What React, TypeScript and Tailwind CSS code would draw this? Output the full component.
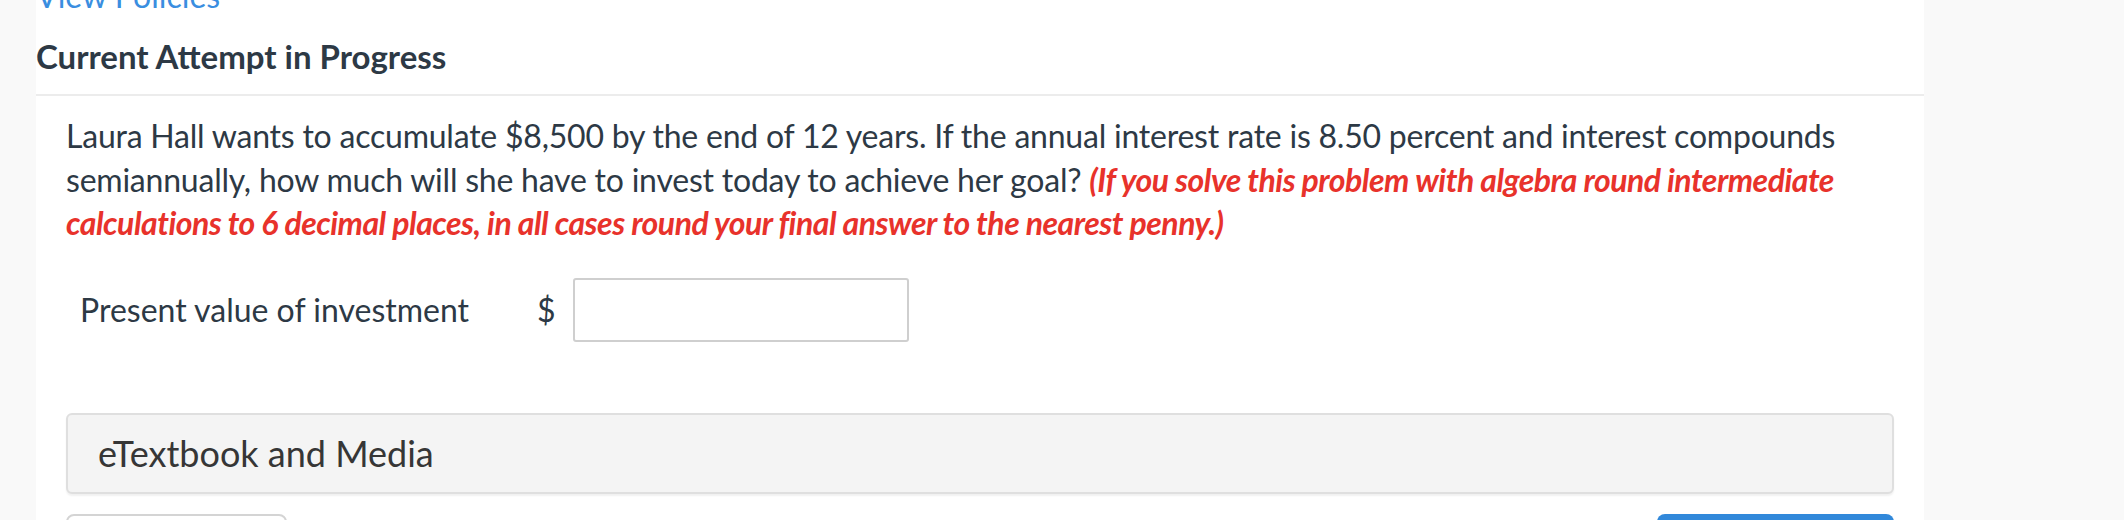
import React from "react";

const Question = () => {
  return (
    <p className="mt-[18px] shrink-0 pl-[30px] pr-[20px] text-[32px] leading-[43.5px] tracking-[-0.22px] text-[#2d3945]">
      Laura Hall wants to accumulate $8,500 by the end of 12 years. If the annual interest rate is 8.50 percent and interest compounds
      <br />
      semiannually, how much will she have to invest today to achieve her goal?{" "}
      <strong className="italic tracking-[-0.5px] text-[#e8322b]">
        (If you solve this problem with algebra round intermediate
        <br />
        calculations to 6 decimal places, in all cases round your final answer to the nearest penny.)
      </strong>
    </p>
  );
};

const App = () => {
  return (
    <div
      className="flex h-[520px] w-full overflow-hidden bg-[#f9f9f9]"
      style={{ fontFamily: "Lato, 'Open Sans', sans-serif" }}
    >
      <div className="w-[36px] shrink-0" />

      <div className="flex w-[1888px] shrink-0 flex-col bg-white">
        <a href="#" className="mt-[-20px] block shrink-0 text-[32px] leading-8 text-[#3a8ee0]">
          View Policies
        </a>

        <h2 className="mt-[28px] shrink-0 text-[33px] font-bold leading-8 text-[#2d3945]">
          Current Attempt in Progress
        </h2>

        <div className="mt-[22px] h-[2px] shrink-0 bg-[#ececec]" />

        <Question />

        <div className="mt-[33px] flex shrink-0 items-center pl-[44px]">
          <span className="w-[457px] text-[32px] text-[#2d3945]">Present value of investment</span>
          <span className="w-[36px] text-[32px] text-[#2d3945]">$</span>
          <input
            type="text"
            className="h-[64px] w-[336px] rounded-[3px] border-2 border-[#cfcfcf] bg-white px-3 text-[28px] outline-none"
          />
        </div>

        <div className="mx-[30px] mt-[71px] flex h-[81px] shrink-0 items-center rounded-[6px] border-2 border-[#dfdfdf] bg-[#f4f4f4] pl-[30px] shadow-[0_2px_2px_rgba(0,0,0,0.06)]">
          <span className="text-[36px] text-[#363636]">eTextbook and Media</span>
        </div>

        <div className="mx-[30px] mt-[20px] flex shrink-0 justify-between">
          <button type="button" className="h-[48px] w-[221px] rounded-[8px] border-2 border-[#d4d4d4] bg-white" />
          <button type="button" className="h-[48px] w-[237px] rounded-[8px] bg-[#3188da]" />
        </div>
      </div>

      <div className="flex-1" />
    </div>
  );
};

export default App;
